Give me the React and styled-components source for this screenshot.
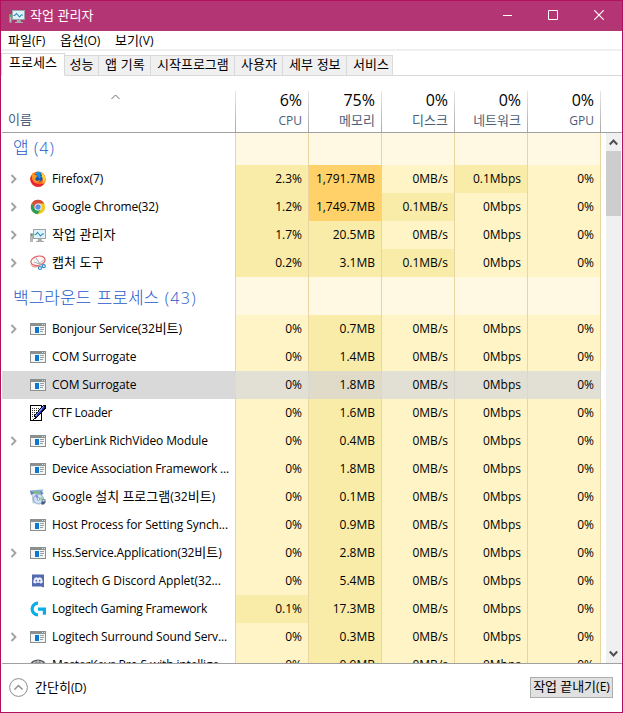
import React from 'react';
import styled, { createGlobalStyle, css } from 'styled-components';

const Global = createGlobalStyle`
  * { box-sizing: border-box; }
  body { margin: 0; }
  svg { display: block; flex: none; }
`;

const Window = styled.div`
  width: 623px;
  height: 713px;
  display: flex;
  flex-direction: column;
  border: 1px solid #b0105e;
  background: #fff;
  color: #000;
  font: 12px/16px 'Open Sans', 'Noto Sans CJK KR', sans-serif;
  overflow: hidden;
  cursor: default;
`;

const Hangul = styled.span`
  font-family: 'Noto Sans CJK KR', sans-serif;
  font-size: ${(p) => p.$size}px;
  font-weight: ${(p) => (p.$light ? 300 : 400)};
  letter-spacing: 0;
  line-height: 1;
`;
const Line = styled.span`
  display: block;
  white-space: pre;
  letter-spacing: ${(p) => p.$ls || 0}px;
`;
function Label({ children, ls, size = 13, light }) {
  const runs = children.split(/([\uac00-\ud7a3]+)/).filter(Boolean);
  return (
    <Line $ls={ls}>
      {runs.map((r, i) => (/[\uac00-\ud7a3]/.test(r) ? <Hangul key={i} $size={size} $light={light}>{r}</Hangul> : r))}
    </Line>
  );
}

const TitleBar = styled.header`
  height: 30px;
  flex: none;
  display: flex;
  align-items: center;
  background: #b43573;
  color: #fff;
  padding-left: 8px;
`;
const TitleText = styled.div`
  flex: 1;
  padding: 0 0 1px 5px;
`;
const WindowButton = styled.div`
  width: 46px;
  height: 30px;
  display: grid;
  place-items: center;
  padding-bottom: 2px;
`;
const MenuBar = styled.nav`
  height: 20px;
  flex: none;
  display: flex;
  align-items: center;
  padding: 2px 0 0 7px;
  border-bottom: 2px solid #f0f0f0;
`;
const MenuItem = styled.div`
  width: ${(p) => p.$w}px;
`;
const TabStrip = styled.div`
  height: 25px;
  flex: none;
  display: flex;
  align-items: flex-end;
  padding-top: 2px;
`;
const Tab = styled.div`
  width: ${(p) => p.$w}px;
  height: 21px;
  padding: 1px 0 0 ${(p) => p.$pad}px;
  background: #f0f0f0;
  border: 1px solid #d9d9d9;
  border-left: 0;
  ${(p) =>
    p.$active &&
    css`
      height: 23px;
      padding-top: 1px;
      background: #fff;
      border-left: 1px solid #d9d9d9;
      border-bottom-color: #fff;
    `}
`;
const TabRest = styled.div`
  flex: 1;
  border-bottom: 1px solid #d9d9d9;
`;

const Header = styled.div`
  height: 57px;
  flex: none;
  display: flex;
  align-items: flex-end;
  margin-left: 1px;
  border-bottom: 1px solid #a0a0a0;
`;
const NameHeader = styled.div`
  width: 234px;
  height: 41px;
  display: flex;
  flex-direction: column;
  justify-content: space-between;
  padding: 2px 0 4px 6px;
  color: #4c607a;
  border-right: 1px solid;
  border-image: linear-gradient(#e8e8e8, #a8a8a8) 1;
`;
const SortArrow = styled.div`
  height: 7px;
  display: flex;
  justify-content: center;
  padding-right: 12px;
`;
const ColumnHeader = styled.div`
  width: 73px;
  height: 41px;
  display: flex;
  flex-direction: column;
  align-items: flex-end;
  justify-content: space-between;
  padding: 0 6px 3px 0;
  color: #4c607a;
  border-right: 1px solid;
  border-image: linear-gradient(#e8e8e8, #a8a8a8) 1;
`;
const Total = styled.div`
  color: #000;
  font-size: 16px;
  line-height: 18px;
`;

const Body = styled.div`
  height: 530px;
  flex: none;
  display: flex;
  margin-left: 1px;
`;
const Table = styled.div`
  width: 604px;
  height: 530px;
  overflow: hidden;
`;
const Row = styled.div`
  display: flex;
  height: ${(p) => p.$h || 28}px;
`;
const Name = styled.div`
  width: 233px;
  display: flex;
  align-items: center;
  padding-left: 8px;
  background: ${(p) => (p.$selected ? '#d9d9d9' : '#fff')};
`;
const Expander = styled.div`
  width: 8px;
  height: 10px;
  flex: none;
  margin: 0 12px 1px 0;
`;
const IconBox = styled.div`
  width: 16px;
  height: 16px;
  flex: none;
  margin-right: 6px;
`;
const GroupName = styled.div`
  width: 233px;
  display: flex;
  align-items: flex-end;
  padding: 0 0 6px 11px;
  color: #1f5ac8;
  font-size: 16px;
  font-weight: 300;
  line-height: 22px;
`;
const heat = { g: '#fff8e3', 0: '#fff4c5', 1: '#f9eca8', 2: '#ffd168' };
const Cells = styled.div`
  display: flex;
  border-left: 1px solid ${(p) => (p.$selected ? '#d9d9d0' : '#e9d5a0')};
`;
const Cell = styled.div`
  width: 73px;
  display: flex;
  align-items: center;
  justify-content: flex-end;
  padding-right: 6px;
  background: ${(p) => (p.$selected ? (p.$heat ? '#dfdbc8' : '#e2e0d4') : heat[p.$heat])};
  border-right: 1px solid ${(p) => (p.$selected ? '#d8d8d2' : '#e9d5a0')};
`;

const ScrollBar = styled.div`
  width: 15px;
  display: flex;
  flex-direction: column;
  justify-content: space-between;
  background: #f0f0f0;
`;
const ScrollButton = styled.div`
  height: 18px;
  display: grid;
  place-items: center;
`;
const Thumb = styled.div`
  height: 65px;
  margin-bottom: auto;
  background: #cdcdcd;
`;
const Footer = styled.footer`
  flex: 1;
  display: flex;
  align-items: center;
  margin-left: 1px;
  padding: 0 9px 1px 7px;
  border-top: 1px solid #a0a0a0;
`;
const FewerDetails = styled.div`
  flex: 1;
  display: flex;
  align-items: center;
  gap: 7px;
`;
const EndTask = styled.button`
  width: 83px;
  height: 21px;
  padding: 0 0 1px;
  display: flex;
  align-items: center;
  justify-content: center;
  font: inherit;
  color: #000;
  background: #e1e1e1;
  border: 1px solid #adadad;
`;

const Monitor = () => (
  <svg width="16" height="16" viewBox="0 0 16 16">
    <path d="M.5 6.500h2v8h-2z" fill="#b8bcbc" stroke="#8d9292" strokeWidth=".6" />
    <path d="M1 7h1.400v2H1z" fill="#3fae49" />
    <path d="M3 2h13v10H3z" fill="#9ea4a6" />
    <path d="M4 3h11v8H4z" fill="#dff2fa" />
    <path d="M8 12h3.500l.8 2H14v1H6v-1h1.600z" fill="#a7acad" />
    <path d="M4.500 7.500h1.200l1.800-2 3 3.500 1.800-2h1.700" fill="none" stroke="#2687bd" strokeWidth="1.100" />
  </svg>
);
const Firefox = () => (
  <svg width="16" height="16" viewBox="0 0 16 16">
    <circle cx="8" cy="8.200" r="7.700" fill="#ff6b1c" />
    <path d="M9 1l4 1.500 2.600 4.500L14 13l-4 2.700c5.500-4 5-9 1-11z" fill="#ffc72c" />
    <path d="M.3 8a7.800 7.800 0 0 0 7.900 7.800c3 0 5.300-1.600 6.500-4C12 14 7 13.500 4.500 11.500 2.500 10 2 7 2.600 3.500.8 4.500.3 6.500.3 8z" fill="#e4243c" />
    <circle cx="8.300" cy="6.600" r="4.400" fill="#1456ad" />
    <path d="M6.500 1C9 .2 11 1 12 2.500 10 2.500 9.500 4 11 6L9.500 8c-1-2-3-3-3.500-5z" fill="#1d8fe0" />
    <path d="M2 3.200 2.800 1.500 4.200 3.600C5.200 3.600 6.300 4.200 7.200 5L6 6.700l-.8 1.500c1 2.300 3 1.300 5 .8-1 3.200-6 3.400-7.400.2C1.800 7 1.500 5 2 3.200z" fill="#ff961e" />
    <path d="M12.400 3c3 2.500 3 7 0 9.700 1.200-3 1-6-.9-7.200z" fill="#ffd93b" />
  </svg>
);
const Chrome = () => (
  <svg width="16" height="16" viewBox="0 0 16 16">
    <circle cx="8" cy="8" r="7.200" fill="#f3c724" />
    <path d="M1.800 4.300A7.200 7.200 0 0 1 14.300 4.600H8L4.900 9.600z" fill="#d94c3d" />
    <path d="M1.800 4.300A7.200 7.200 0 0 0 7.500 15.200l3.500-5.300-3 1.500-3.100-1.800z" fill="#2a9d59" />
    <circle cx="8" cy="8" r="3.500" fill="#fff" />
    <circle cx="8" cy="8" r="2.700" fill="#5b8fe8" />
  </svg>
);
const Snip = () => (
  <svg width="16" height="16" viewBox="0 0 16 16" fill="none">
    <ellipse cx="8" cy="5.800" rx="7.200" ry="4.600" transform="rotate(-14 8 5.800)" fill="#fdf6f6" stroke="#e36565" strokeWidth="1.200" />
    <path d="M1 9.500c2 3.500 6 2.500 8 1.500" stroke="#e57575" />
    <path d="m6 3 5 7.500M14 4.500 9.500 9M4 7l7.500 2.500" stroke="#a3adb2" />
    <circle cx="10" cy="13" r="1.500" stroke="#258cc4" strokeWidth="1.200" />
    <circle cx="13.800" cy="11.200" r="1.500" stroke="#258cc4" strokeWidth="1.200" />
  </svg>
);
const AppWindow = () => (
  <svg width="16" height="16" viewBox="0 0 16 16" shapeRendering="crispEdges">
    <path d="M0 2h16v12H0z" fill="#8a9092" />
    <path d="M1 5h14v8H1z" fill="#f4f5f5" />
    <path d="M12 3h1v1h-1zM14 3h1v1h-1z" fill="#dfe2e2" />
    <path d="M5 6h4v6H5z" fill="#0a78d6" />
    <path d="M10 6h4v1h-4zM10 8h4v1h-4zM10 10h3v1h-3z" fill="#999e9f" />
  </svg>
);
const Ctf = () => (
  <svg width="16" height="16" viewBox="0 0 16 16" shapeRendering="crispEdges">
    <path d="M0 0h12v16H0z" fill="#000" />
    <path d="M1 1h10v14H1z" fill="#fff" />
    <path d="M2 3.500h8M2 5.500h7M2 7.500h6M2 9.500h4M2 11.500h3" stroke="#333" strokeDasharray="1 1" />
    <path d="M13 0h3v3L7 13l-4 2 1-4z" fill="#000" />
    <path d="m13.500 1 1.500 1-8 10-2-1z" fill="#1c32c8" />
    <path d="m13.500 1.500-8 9.500" stroke="#7f9cf5" />
    <path d="m3 14 1-2 1.500 1z" fill="#fff" />
  </svg>
);
const Installer = () => (
  <svg width="16" height="16" viewBox="0 0 16 16">
    <path d="M0 1.500 13 .5 12 5 2 6z" fill="#86aedb" />
    <path d="M2 4.500h9l1 8-9 1.500z" fill="#dfe6ee" stroke="#9aa9bb" strokeWidth=".6" />
    <path d="m0 1.500 4.500 2.500L1 6zM10 2l3.500 2-2 2.500z" fill="#5d83bd" />
    <path d="M3.500 2.500h6v2h-6z" fill="#7fbf68" />
    <circle cx="8.500" cy="10" r="5" fill="#cfe2f6" stroke="#7299cc" strokeWidth=".8" />
    <path d="m8.500 10-4-3 3-1.500z" fill="#8f8be0" />
    <path d="m8.500 10 4-2.500.3 4z" fill="#93d6a6" />
    <circle cx="8.500" cy="10" r="1.300" fill="#fff" stroke="#6580af" strokeWidth=".7" />
    <path d="M12 10.500h3.500v3L14 15.500h-3z" fill="#4d5d7c" />
    <path d="M12.500 11h2v1.500h-2z" fill="#d9dee6" />
  </svg>
);
const Discord = () => (
  <svg width="16" height="16" viewBox="0 0 16 16">
    <path d="M2 1.500h12V14l-1 .5-1.500-1H2z" fill="#536ab0" />
    <path d="M4.800 4.800 6.700 4.200l.5.600h1.600l.5-.6 1.900.6c1.200 1.700 1.600 3.200 1.500 4.800-.6.600-1.400.9-2.200 1l-.7-.9H6.200l-.7.9c-.8-.1-1.600-.4-2.200-1-.1-1.600.3-3.100 1.500-4.800z" fill="#eef1fb" />
    <circle cx="6.300" cy="7.700" r=".9" fill="#536ab0" />
    <circle cx="9.700" cy="7.700" r=".9" fill="#536ab0" />
  </svg>
);
const Logitech = () => (
  <svg width="16" height="16" viewBox="0 0 16 16" fill="#0aaee6">
    <path d="M8 .5v3.200a4.300 4.300 0 0 0 0 8.600v3.200A7.500 7.500 0 0 1 8 .5z" />
    <path d="M8 6.500h8v7.200h-3.200V9.700H8z" />
  </svg>
);
const Keyboard = () => (
  <svg width="16" height="16" viewBox="0 0 16 16">
    <ellipse cx="8" cy="8" rx="7.800" ry="5.500" fill="#54585a" />
    <path d="M2 7c2-3 10-3 12 0M5 4.500 4 8M8 3v4M11 4.500 12 8" fill="none" stroke="#d5d8d9" strokeWidth=".9" />
  </svg>
);
const icons = { Monitor, Firefox, Chrome, Snip, AppWindow, Ctf, Installer, Discord, Logitech, Keyboard };

const columns = [['6%', 'CPU'], ['75%', '메모리'], ['0%', '디스크'], ['0%', '네트워크'], ['0%', 'GPU']];
const rows = [
  { group: '앱 (4)', h: 32, ls: 1.1 },
  { name: 'Firefox(7)', ls: -0.12, icon: 'Firefox', open: true, v: ['2.3%', '1,791.7MB', '0MB/s', '0.1Mbps'], heat: [1, 2, 0, 1] },
  { name: 'Google Chrome(32)', ls: -0.1, icon: 'Chrome', open: true, v: ['1.2%', '1,749.7MB', '0.1MB/s', '0Mbps'], heat: [1, 2, 1, 0] },
  { name: '작업 관리자', ls: 0.5, icon: 'Monitor', open: true, v: ['1.7%', '20.5MB', '0MB/s', '0Mbps'], heat: [1, 1, 0, 0] },
  { name: '캡처 도구', ls: 0.5, icon: 'Snip', open: true, v: ['0.2%', '3.1MB', '0.1MB/s', '0Mbps'], heat: [1, 1, 1, 0] },
  { group: '백그라운드 프로세스 (43)', h: 38, ls: 1.3 },
  { name: 'Bonjour Service(32비트)', ls: -0.13, icon: 'AppWindow', open: true, mb: '0.7MB' },
  { name: 'COM Surrogate', ls: -0.13, icon: 'AppWindow', mb: '1.4MB' },
  { name: 'COM Surrogate', ls: -0.13, icon: 'AppWindow', mb: '1.8MB', selected: true },
  { name: 'CTF Loader', ls: -0.25, icon: 'Ctf', mb: '1.6MB' },
  { name: 'CyberLink RichVideo Module', ls: -0.13, icon: 'AppWindow', open: true, mb: '0.4MB' },
  { name: 'Device Association Framework ...', ls: -0.18, icon: 'AppWindow', mb: '1.8MB' },
  { name: 'Google 설치 프로그램(32비트)', ls: 0.1, icon: 'Installer', mb: '0.1MB' },
  { name: 'Host Process for Setting Synch...', ls: -0.1, icon: 'AppWindow', mb: '0.9MB' },
  { name: 'Hss.Service.Application(32비트)', ls: -0.15, icon: 'AppWindow', open: true, mb: '2.8MB' },
  { name: 'Logitech G Discord Applet(32...', ls: -0.07, icon: 'Discord', mb: '5.4MB' },
  { name: 'Logitech Gaming Framework', ls: -0.2, icon: 'Logitech', v: ['0.1%', '17.3MB', '0MB/s', '0Mbps'], heat: [1, 1, 0, 0] },
  { name: 'Logitech Surround Sound Serv...', ls: -0.13, icon: 'AppWindow', open: true, mb: '0.3MB' },
  { name: 'MasterKeys Pro S with intellige...', ls: -0.13, icon: 'Keyboard', mb: '0.9MB' },
];

function GroupRow({ row }) {
  return (
    <Row $h={row.h}>
      <GroupName><Label size={17} ls={row.ls} light>{row.group}</Label></GroupName>
      <Cells>{columns.map((c, i) => <Cell key={i} $heat="g" />)}</Cells>
    </Row>
  );
}
function ProcessRow({ row }) {
  const values = [...(row.v || ['0%', row.mb, '0MB/s', '0Mbps']), '0%'];
  const levels = [...(row.heat || [0, 1, 0, 0]), 0];
  const Icon = icons[row.icon];
  return (
    <Row>
      <Name $selected={row.selected}>
        <Expander>
          {row.open && (
            <svg width="8" height="10" viewBox="0 0 8 10">
              <path d="m1.500 1 4 4-4 4" fill="none" stroke="#a0a0a0" strokeWidth="1.800" />
            </svg>
          )}
        </Expander>
        <IconBox><Icon /></IconBox>
        <Label ls={row.ls}>{row.name}</Label>
      </Name>
      <Cells $selected={row.selected}>
        {values.map((v, i) => <Cell key={i} $heat={levels[i]} $selected={row.selected}>{v}</Cell>)}
      </Cells>
    </Row>
  );
}

const tabs = [['프로세스', 64, 7], ['성능', 34, 4.5], ['앱 기록', 52, 6], ['시작프로그램', 84, 6], ['사용자', 48, 6], ['세부 정보', 64, 6], ['서비스', 46, 6]];

export default function App() {
  return (
    <Window>
      <Global />
      <TitleBar>
        <Monitor />
        <TitleText><Label ls={0.5}>작업 관리자</Label></TitleText>
        <WindowButton><svg width="10" height="10"><path d="M1 5.500h9" stroke="#fff" /></svg></WindowButton>
        <WindowButton><svg width="10" height="10"><path d="M.5.5h9v9h-9z" fill="none" stroke="#fff" /></svg></WindowButton>
        <WindowButton><svg width="10" height="10"><path d="m.3.3 9.400 9.400M9.700.3.3 9.700" stroke="#fff" strokeWidth="1.200" /></svg></WindowButton>
      </TitleBar>
      <MenuBar>
        <MenuItem $w={52}><Label>파일(F)</Label></MenuItem>
        <MenuItem $w={55}><Label>옵션(O)</Label></MenuItem>
        <MenuItem $w={50}><Label ls={0.2}>보기(V)</Label></MenuItem>
      </MenuBar>
      <TabStrip>
        {tabs.map(([t, w, pad], i) => <Tab key={t} $w={w} $pad={pad} $active={i === 0}><Label ls={0.6}>{t}</Label></Tab>)}
        <TabRest />
      </TabStrip>
      <Header>
        <NameHeader>
          <SortArrow><svg width="9" height="7"><path d="m.5 6 4-4 4 4" fill="none" stroke="#6b6b6b" /></svg></SortArrow>
          <Label>이름</Label>
        </NameHeader>
        {columns.map(([total, label]) => (
          <ColumnHeader key={label}>
            <Total>{total}</Total>
            <Label>{label}</Label>
          </ColumnHeader>
        ))}
      </Header>
      <Body>
        <Table>
          {rows.map((row, i) => (row.group ? <GroupRow key={i} row={row} /> : <ProcessRow key={i} row={row} />))}
        </Table>
        <ScrollBar>
          <ScrollButton><svg width="9" height="8"><path d="m.8 6.500 3.700-4 3.700 4" fill="none" stroke="#505050" strokeWidth="2" /></svg></ScrollButton>
          <Thumb />
          <ScrollButton><svg width="9" height="8"><path d="m.8 1.500 3.700 4 3.700-4" fill="none" stroke="#505050" strokeWidth="2" /></svg></ScrollButton>
        </ScrollBar>
      </Body>
      <Footer>
        <FewerDetails>
          <svg width="19" height="19" viewBox="0 0 19 19" fill="none">
            <circle cx="9.500" cy="9.500" r="8.900" stroke="#8c8c8c" />
            <path d="m5.500 11.500 4-4 4 4" stroke="#909090" strokeWidth="1.500" />
          </svg>
          <Label ls={-0.2}>간단히(D)</Label>
        </FewerDetails>
        <EndTask><Label>작업 끝내기(E)</Label></EndTask>
      </Footer>
    </Window>
  );
}
